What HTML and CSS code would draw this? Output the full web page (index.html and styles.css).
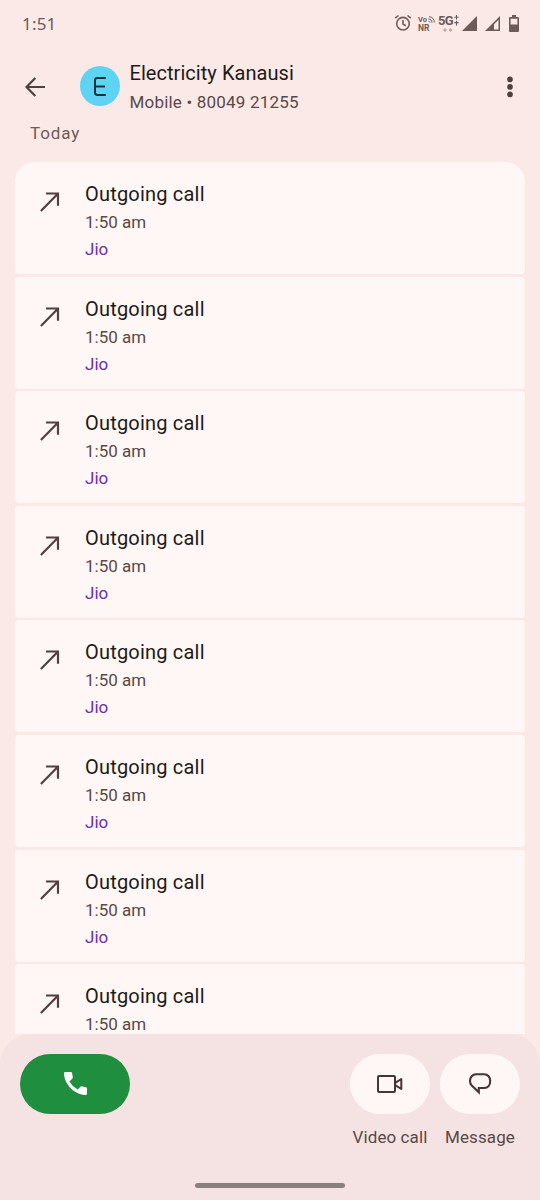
FILE: index.html
```html
<!DOCTYPE html>
<html lang="en">
<head>
<meta charset="utf-8">
<title>Call history</title>
<link rel="stylesheet" href="styles.css">
</head>
<body>
<div class="screen">
  <div class="status">
    <span class="clock">1:51</span>
    <div class="status-icons">
      <svg class="alarm" width="18" height="18" viewBox="0 0 18 18" fill="none" stroke="#6c5b59" stroke-width="1.6"><circle cx="9" cy="9.7" r="6.3"/><path d="M9 6v4.1l2.8 1.7M1.2 4.2 4.5 1.5M16.8 4.2 13.5 1.5"/></svg>
      <div class="vonr"><div class="vo"><span>Vo</span><svg width="7" height="7" viewBox="0 0 7 7" fill="none" stroke="#6c5b59"><path d="M.3 3C2.5 3 4 4.5 4 6.7M1 .8C4.3.8 6.3 3 6.3 6.5M.5 5l1.6 1.6"/></svg></div><span>NR</span></div>
      <div class="net"><span class="g">5G</span><svg class="arrows" width="5" height="11" viewBox="0 0 5 11" fill="none" stroke="#6c5b59" stroke-width="1.1"><path d="M2.5 0v4.6M.4 2.3h4.2M2.5 5.8v4.6M.4 7.6h4.2"/></svg><svg class="mini" width="10" height="4" viewBox="0 0 10 4" fill="#bcaaa8"><path d="m2 0 2 2-2 2-2-2zM7.5 0l2 2-2 2-2-2z"/></svg></div>
      <svg class="sig1" width="15" height="15" viewBox="0 0 15 15" fill="#6c5b59"><path d="M15 0v15H0z"/></svg>
      <svg class="sig2" width="15" height="15" viewBox="0 0 15 15" fill="#6c5b59"><path fill-rule="evenodd" d="M15 0v15H0zM13.5 3.7 9 8.2v5.3h4.5z"/></svg>
      <svg class="battery" width="10" height="17" viewBox="0 0 10 17" fill="#6c5b59"><path fill-rule="evenodd" d="M3 0h4v2h2q1 0 1 1v13q0 1-1 1H1q-1 0-1-1V3q0-1 1-1h2zM1.6 3.7v5.8h6.8V3.7z"/></svg>
    </div>
  </div>
  <header class="header">
    <svg class="back" width="20" height="20" viewBox="0 0 20 20" fill="none" stroke="#51403f" stroke-width="2.2"><path d="M20 10H1.6M10.3 1.1 1.5 10l8.8 8.9"/></svg>
    <div class="avatar"><svg width="12" height="19" viewBox="0 0 12 19" fill="none" stroke="#17323c" stroke-width="2"><path d="M11.8 1H3.4Q1 1 1 3.4v12.2Q1 18 3.4 18h8.4M1 9.5h10"/></svg></div>
    <div class="contact">
      <div class="name">Electricity Kanausi</div>
      <div class="number">Mobile • 80049 21255</div>
    </div>
    <svg class="more" width="6" height="22" viewBox="0 0 6 22" fill="#51403f"><circle cx="3" cy="3.4" r="2.8"/><circle cx="3" cy="10.9" r="2.8"/><circle cx="3" cy="18.4" r="2.8"/></svg>
  </header>
  <div class="day">Today</div>
  <main class="calls" id="calls"></main>
  <footer class="panel">
    <div class="actions">
      <div class="call"><svg width="23" height="23" viewBox="0 0 24 24" fill="#fff"><path d="M1.2 0h6q1 0 1.2 1l.8 4.6q.1.7-.4 1.2L5.7 9.9q2.9 5.4 8.5 8.4l3-3q.6-.5 1.2-.4l4.6.9q1 .2 1 1.2v5.8q0 1.2-1.2 1.2C11.8 23.7.3 13.6 0 1.2Q0 0 1.2 0z"/></svg></div>
      <div class="action">
        <div class="pill"><svg width="26" height="18" viewBox="0 0 26 18" fill="none" stroke="#453534" stroke-width="2" stroke-linejoin="round"><rect x="1" y="1" width="17" height="16" rx="1.2"/><path d="M18.2 7.9 24.3 4v10l-6.1-3.9z"/></svg></div>
        <span class="label video">Video call</span>
      </div>
      <div class="action">
        <div class="pill"><svg width="24" height="22" viewBox="0 0 24 22" fill="none" stroke="#453534" stroke-width="2.1"><path d="M10.8 19.2V15h5.4C20 15 22.2 11.9 22.2 8.1S20 1.3 16.2 1.3H8.2C4.4 1.3 2 4.3 2 7.9c0 2.3.6 3.5 1.7 4.6z"/></svg></div>
        <span class="label">Message</span>
      </div>
    </div>
    <div class="home"></div>
  </footer>
</div>
<script src="calls.js"></script>
</body>
</html>
```
FILE: styles.css
```css
* { box-sizing: border-box; }
body { margin: 0; font-family: Roboto, "Liberation Sans", sans-serif; background: #fbe9e7; color: #201a19; }
svg { display: block; flex: none; }
.screen { width: 540px; height: 1200px; display: flex; flex-direction: column; overflow: hidden; }
.status { height: 48px; flex: none; display: flex; justify-content: space-between; padding: 0 21px 0 22px; color: #6c5b59; }
.clock { font: 17px/48px "Noto Sans", sans-serif; letter-spacing: 0.2px; }
.status-icons { display: flex; align-items: flex-start; }
.alarm { margin-top: 14px; }
.vonr { width: 17px; margin: 16px 0 0 6px; font: bold 8px/8px Roboto, sans-serif; }
.vo { display: flex; font-size: 7.5px; gap: 1px; }
.vonr > span { display: block; font-size: 8.5px; }
.net { width: 21px; margin: 13px 0 0 3px; display: grid; grid-template-columns: 15px 5px; column-gap: 1px; }
.g { font: bold 13px/15px Roboto, sans-serif; letter-spacing: -0.8px; }
.arrows { margin-top: 2px; }
.mini { margin-left: 5px; }
.sig1 { margin: 16px 0 0 3px; }
.sig2 { margin: 16px 0 0 8px; }
.battery { margin: 15px 0 0 9px; }
.header { height: 72px; flex: none; display: flex; align-items: flex-start; padding: 0 27px 0 25px; }
.back { margin-top: 29px; }
.avatar { width: 40px; height: 40px; margin: 18px 10px 0 34.5px; border-radius: 50%; background: #5fd3f3; display: flex; align-items: center; justify-content: center; }
.contact { flex: 1; padding-top: 11px; white-space: nowrap; }
.name { font-size: 20px; line-height: 28px; letter-spacing: 0.05px; }
.number { padding-top: 1px; font-size: 17px; line-height: 28px; color: #594947; letter-spacing: 0.2px; }
.more { margin-top: 28px; }
.day { height: 42px; flex: none; padding-left: 30px; font-size: 17px; line-height: 26px; letter-spacing: 0.9px; color: #705a58; }
.calls { flex: 1; min-height: 0; margin: 0 15px; overflow: hidden; display: flex; flex-direction: column; gap: 2.6px; border-radius: 20px 20px 0 0; }
.row { height: 112px; flex: none; display: flex; padding: 18px 0 0 25px; background: #fff7f5; border-radius: 4px; }
.row svg { margin: 12px 25px 0 0; }
.title { font-size: 20px; line-height: 28px; letter-spacing: 0.2px; }
.time, .sim { font-size: 17px; line-height: 27px; color: #594947; letter-spacing: 0; }
.time { padding-top: 1px; }
.sim { color: #6a2fb0; }
.panel { height: 166.5px; flex: none; background: #f5e3e3; border-radius: 30px 30px 0 0; display: flex; flex-direction: column; padding: 20px 20px 12px; }
.actions { display: flex; gap: 10px; }
.call { width: 110px; height: 60px; margin-right: auto; border-radius: 30px; background: #1f8e3e; display: flex; align-items: center; justify-content: center; }
.action { width: 80px; display: flex; flex-direction: column; align-items: center; }
.pill { width: 80px; height: 60px; border-radius: 30px; background: #fff7f5; display: flex; align-items: center; justify-content: center; }
.label { margin-top: 9px; font-size: 17px; line-height: 28px; color: #594947; white-space: nowrap; letter-spacing: 0.1px; }
.home { width: 150px; height: 5px; margin: auto auto 0; border-radius: 3px; background: #8b7f7f; }
```
FILE: calls.js
```js
// The last entry's SIM line lies below the fold.
const calls = Array.from({ length: 8 }, (_, i) => ({ title: "Outgoing call", time: "1:50 am", sim: i < 7 ? "Jio" : "" }));
document.getElementById("calls").innerHTML = calls.map(c => `
  <article class="row">
    <svg width="20" height="20" viewBox="0 0 20 20" fill="none" stroke="#51403f" stroke-width="2.2"><path d="M.9 18.9 17.6 2M6 1.5h12v12.3"/></svg>
    <div>
      <div class="title">${c.title}</div>
      <div class="time">${c.time}</div>
      ${c.sim ? `<div class="sim">${c.sim}</div>` : ""}
    </div>
  </article>`).join("");
```
